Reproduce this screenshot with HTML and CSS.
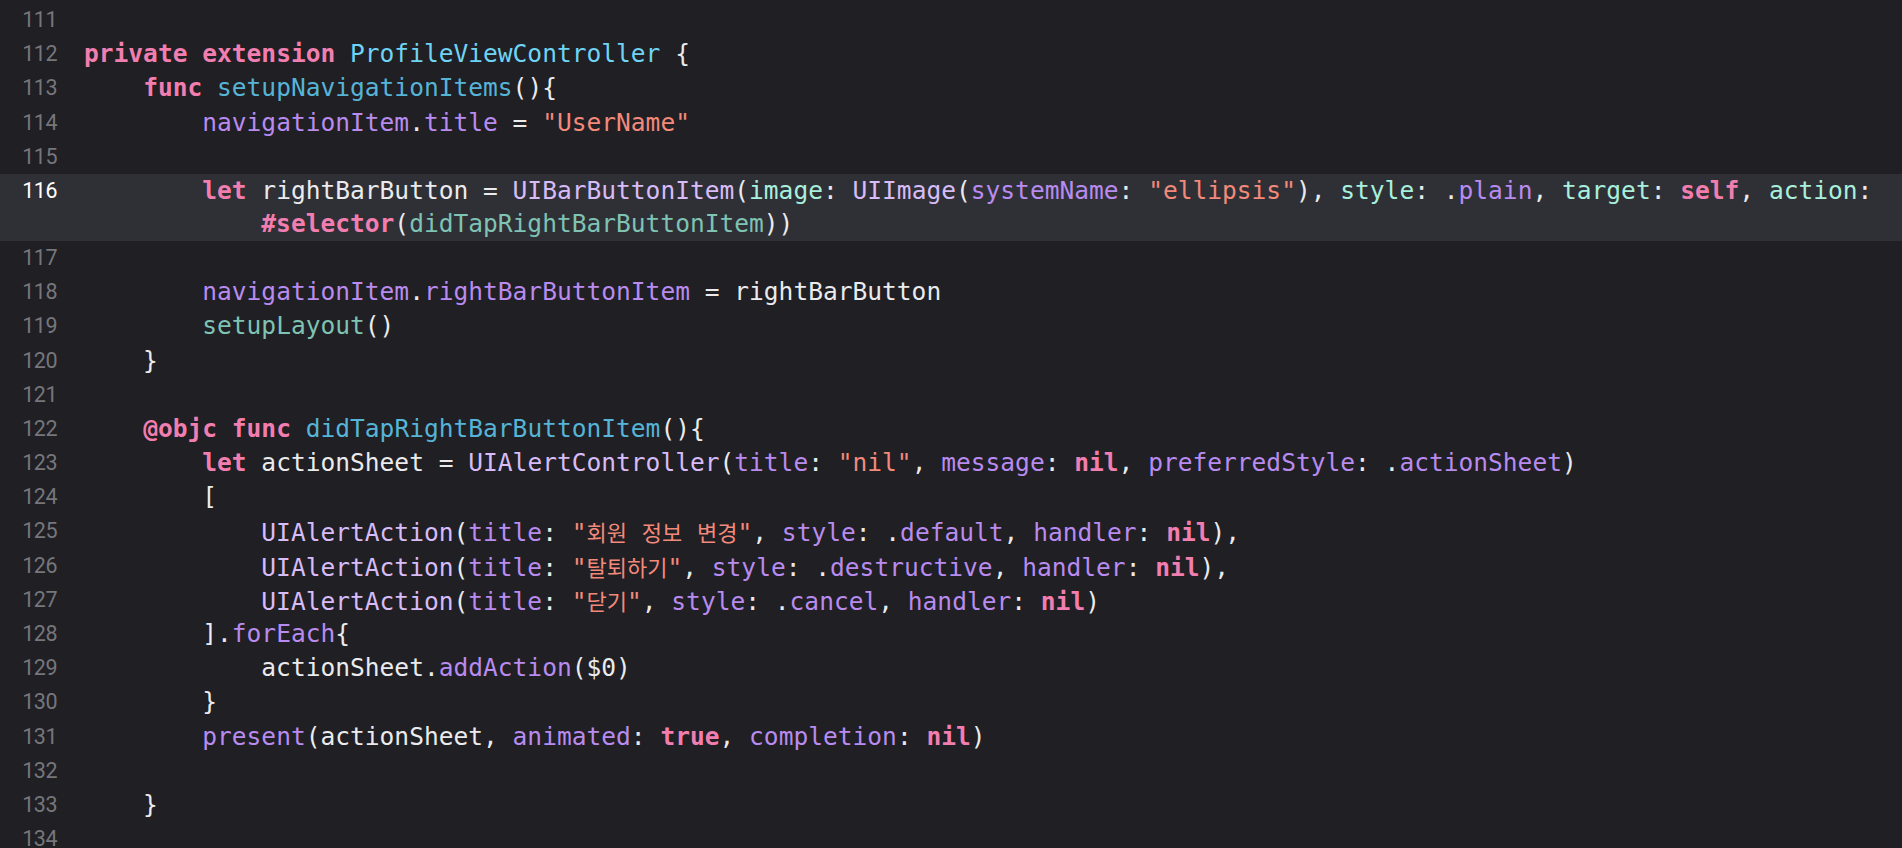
FILE: index.html
```html
<!DOCTYPE html>
<html lang="ko">
<head>
<meta charset="utf-8">
<title>ProfileViewController.swift</title>
<link rel="stylesheet" href="styles.css">
</head>
<body>
<div class="editor">
  <div class="row"><span class="num">111</span><span class="code"></span></div>
  <div class="row"><span class="num">112</span><span class="code"><span class="k">private</span> <span class="k">extension</span> <span class="t">ProfileViewController</span> {</span></div>
  <div class="row"><span class="num">113</span><span class="code">    <span class="k">func</span> <span class="d">setupNavigationItems</span>(){</span></div>
  <div class="row"><span class="num">114</span><span class="code">        <span class="p">navigationItem</span>.<span class="p">title</span> = <span class="s">"UserName"</span></span></div>
  <div class="row"><span class="num">115</span><span class="code"></span></div>
  <div class="hl">
    <div class="row cur"><span class="num">116</span><span class="code">        <span class="k">let</span> rightBarButton = <span class="c">UIBarButtonItem</span>(<span class="m">image</span>: <span class="c">UIImage</span>(<span class="p">systemName</span>: <span class="s">"ellipsis"</span>), <span class="m">style</span>: .<span class="p">plain</span>, <span class="m">target</span>: <span class="k">self</span>, <span class="m">action</span>:</span></div>
    <div class="row cur"><span class="num"></span><span class="code">            <span class="k">#selector</span>(<span class="pf">didTapRightBarButtonItem</span>))</span></div>
  </div>
  <div class="row"><span class="num">117</span><span class="code"></span></div>
  <div class="row"><span class="num">118</span><span class="code">        <span class="p">navigationItem</span>.<span class="p">rightBarButtonItem</span> = rightBarButton</span></div>
  <div class="row"><span class="num">119</span><span class="code">        <span class="pf">setupLayout</span>()</span></div>
  <div class="row"><span class="num">120</span><span class="code">    }</span></div>
  <div class="row"><span class="num">121</span><span class="code"></span></div>
  <div class="row"><span class="num">122</span><span class="code">    <span class="k">@objc</span> <span class="k">func</span> <span class="d">didTapRightBarButtonItem</span>(){</span></div>
  <div class="row"><span class="num">123</span><span class="code">        <span class="k">let</span> actionSheet = <span class="c">UIAlertController</span>(<span class="p">title</span>: <span class="s">"nil"</span>, <span class="p">message</span>: <span class="k">nil</span>, <span class="p">preferredStyle</span>: .<span class="p">actionSheet</span>)</span></div>
  <div class="row"><span class="num">124</span><span class="code">        [</span></div>
  <div class="row"><span class="num">125</span><span class="code">            <span class="c">UIAlertAction</span>(<span class="p">title</span>: <span class="s">"<span class="ko">회원</span> <span class="ko">정보</span> <span class="ko">변경</span>"</span>, <span class="p">style</span>: .<span class="p">default</span>, <span class="p">handler</span>: <span class="k">nil</span>),</span></div>
  <div class="row"><span class="num">126</span><span class="code">            <span class="c">UIAlertAction</span>(<span class="p">title</span>: <span class="s">"<span class="ko">탈퇴하기</span>"</span>, <span class="p">style</span>: .<span class="p">destructive</span>, <span class="p">handler</span>: <span class="k">nil</span>),</span></div>
  <div class="row"><span class="num">127</span><span class="code">            <span class="c">UIAlertAction</span>(<span class="p">title</span>: <span class="s">"<span class="ko">닫기</span>"</span>, <span class="p">style</span>: .<span class="p">cancel</span>, <span class="p">handler</span>: <span class="k">nil</span>)</span></div>
  <div class="row"><span class="num">128</span><span class="code">        ].<span class="p">forEach</span>{</span></div>
  <div class="row"><span class="num">129</span><span class="code">            actionSheet.<span class="p">addAction</span>($0)</span></div>
  <div class="row"><span class="num">130</span><span class="code">        }</span></div>
  <div class="row"><span class="num">131</span><span class="code">        <span class="p">present</span>(actionSheet, <span class="p">animated</span>: <span class="k">true</span>, <span class="p">completion</span>: <span class="k">nil</span>)</span></div>
  <div class="row"><span class="num">132</span><span class="code"></span></div>
  <div class="row"><span class="num">133</span><span class="code">    }</span></div>
  <div class="row"><span class="num">134</span><span class="code"></span></div>
</div>
</body>
</html>
```

FILE: styles.css
```css
html, body {
  margin: 0;
  padding: 0;
  background: #1f1f24;
  height: 100%;
  overflow: hidden;
}

.editor {
  padding-top: 3px;
  display: flex;
  flex-direction: column;
}

.row {
  display: flex;
  height: 34.2px;
  line-height: 34.2px;
  white-space: pre;
}

.hl {
  background: #2f3036;
  display: flex;
  flex-direction: column;
}

.row.cur {
  height: 33.5px;
  line-height: 33.5px;
}

.num {
  flex: 0 0 57px;
  text-align: right;
  font-family: Roboto, "Liberation Sans", sans-serif;
  font-size: 21.5px;
  letter-spacing: -0.5px;
  font-variant-numeric: tabular-nums;
  color: #76767b;
}

.cur .num {
  color: #ffffff;
}

.code {
  margin-left: 27px;
  font-family: "DejaVu Sans Mono", "Liberation Mono", monospace;
  font-size: 24.55px;
  color: #ebebed;
}

.k { color: #f27eb0; font-weight: bold; }
.t { color: #6fd4f4; }
.d { color: #56b4d6; }
.p { color: #b98bef; }
.c { color: #d7bcf8; }
.m { color: #a8f0dd; }
.pf { color: #7ec3b3; }
.s { color: #f3897a; }

.ko {
  font-family: "Noto Sans CJK KR", "Noto Sans CJK SC", sans-serif;
  font-size: 22px;
}
```
